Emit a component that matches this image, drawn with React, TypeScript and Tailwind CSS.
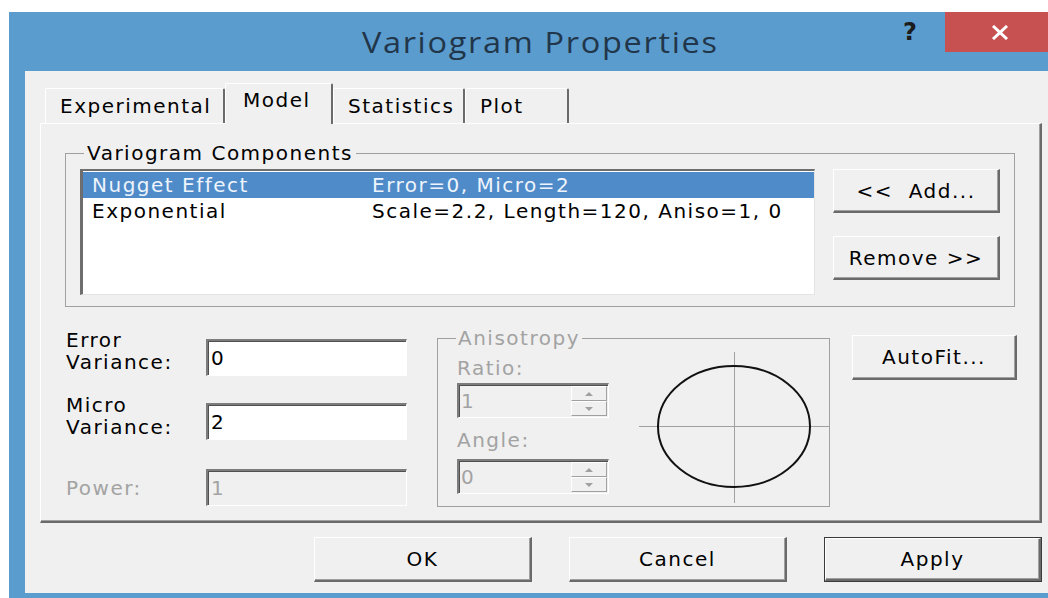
import clsx from "clsx";
import type { ReactNode } from "react";

// classic 3D edges
const raised =
  "bg-[#f0f0f0] border-t border-l border-t-white border-l-white border-r-2 border-b-2 border-r-[#6a6a6a] border-b-[#6a6a6a] shadow-[inset_-1px_-1px_0_#a0a0a0]";
const sunken =
  "border-t-2 border-l-2 border-t-[#7c7c7c] border-l-[#7c7c7c] border-b border-r border-b-white border-r-white shadow-[inset_1px_1px_0_#505050]";

function Button({
  children,
  className,
  primary = false,
}: {
  children: ReactNode;
  className?: string;
  primary?: boolean;
}) {
  if (primary) {
    return (
      <div className={clsx("border border-[#3a3a3a] flex", className)}>
        <div className={clsx(raised, "flex-1 flex items-center justify-center")}>{children}</div>
      </div>
    );
  }
  return (
    <div className={clsx(raised, "flex items-center justify-center whitespace-pre", className)}>
      {children}
    </div>
  );
}

function Tab({ label, width, active = false }: { label: string; width: number; active?: boolean }) {
  return (
    <div
      style={{ width }}
      className={clsx(
        "bg-[#f0f0f0] border-t border-l border-t-white border-l-white border-r-2 border-r-[#6a6a6a] rounded-t-[2px] leading-[24px]",
        active ? "h-[41px] pt-[4px] pl-[17px]" : "h-[35px] mb-px pt-[5px] pl-[14px]"
      )}
    >
      {label}
    </div>
  );
}

function Field({ value, disabled = false, className }: { value: string; disabled?: boolean; className?: string }) {
  return (
    <div
      className={clsx(
        sunken,
        "h-[37px] flex items-center pl-[3px]",
        disabled ? "bg-[#f0f0f0] text-[#a3a3a3]" : "bg-white",
        className
      )}
    >
      {value}
    </div>
  );
}

function Arrow({ up }: { up?: boolean }) {
  return (
    <div className="flex-1 flex items-center justify-center bg-[#f0f0f0] border-t border-l border-white border-r border-b border-r-[#a0a0a0] border-b-[#a0a0a0]">
      <svg width="8" height="4" viewBox="0 0 8 4">
        <path d={up ? "M0 4 L4 0 L8 4 Z" : "M0 0 L4 4 L8 0 Z"} fill="#a0a0a0" />
      </svg>
    </div>
  );
}

function Spinner({ value }: { value: string }) {
  return (
    <div className={clsx(sunken, "w-[152px] h-[35px] flex bg-[#f0f0f0]")}>
      <div className="flex-1 flex items-center pl-[2px] text-[#a3a3a3]">{value}</div>
      <div className="w-[37px] flex flex-col py-[1px] pr-[1px]">
        <Arrow up />
        <Arrow />
      </div>
    </div>
  );
}

function ListRow({ name, params, selected = false }: { name: string; params: string; selected?: boolean }) {
  return (
    <div className={clsx("h-[26px] flex items-center pl-[9px]", selected && "bg-[#4f8bc9] text-[#eef4fb]")}>
      <span className="w-[280px]">{name}</span>
      <span>{params}</span>
    </div>
  );
}

export default function App() {
  return (
    <div className="w-[1048px] h-[598px] overflow-hidden bg-white pt-[12px] pl-[9px] font-['DejaVu_Sans',sans-serif] text-[20px] tracking-[1.5px] text-black">
      <div className="w-[1062px] h-[600px] bg-[#5b9ccf] flex flex-col">
        {/* caption */}
        <div className="h-[59px] shrink-0 flex">
          <div className="w-[176px]" />
          <div className="flex-1 flex items-center justify-center">
            <span className="scale-x-[1.12] font-['Open_Sans',sans-serif] text-[29px] tracking-[1.5px] text-[#22364a]">
              Variogram Properties
            </span>
          </div>
          <div className="w-[176px] flex items-start">
            <div className="w-[30px] h-[40px] flex items-center justify-center font-bold text-[24px] tracking-normal text-[#1c1c1c]">
              ?
            </div>
            <div className="ml-[20px] w-[110px] h-[40px] bg-[#c75050] flex items-center justify-center">
              <svg width="20" height="15" viewBox="0 0 20 15">
                <path d="M3 1 L17 14 M17 1 L3 14" stroke="#fff" strokeWidth="3" />
              </svg>
            </div>
          </div>
        </div>

        {/* client area */}
        <div className="mx-[16px] h-[522px] bg-[#f0f0f0] pl-[15px] pt-[12px]">
          <div className="h-[41px] -mb-px flex items-end pl-[5px] relative z-10">
            <Tab label="Experimental" width={180} />
            <Tab label="Model" width={108} active />
            <Tab label="Statistics" width={132} />
            <Tab label="Plot" width={104} />
          </div>

          <div className="w-[1002px] h-[400px] border-t border-l border-white border-r-2 border-b-2 border-r-[#6a6a6a] border-b-[#6a6a6a] shadow-[inset_-1px_-1px_0_#a0a0a0] pl-[24px] pt-[18px]">
            <fieldset className="w-[945px] h-[165px] border border-[#a0a0a0] px-[14px]">
              <legend className="ml-[4px] px-[3px] leading-[22px]">Variogram Components</legend>
              <div className="flex items-start mt-[5px]">
                <div className="w-[735px] h-[126px] bg-white border-t-2 border-l-[3px] border-t-[#6e6e6e] border-l-[#6e6e6e] border-r border-b border-r-[#e4e4e4] border-b-[#e4e4e4] pt-px">
                  <ListRow name="Nugget Effect" params="Error=0, Micro=2" selected />
                  <ListRow name="Exponential" params="Scale=2.2, Length=120, Aniso=1, 0" />
                </div>
                <div className="ml-[18px] flex flex-col gap-[23px]">
                  <Button className="w-[167px] h-[44px]">{"<<  Add..."}</Button>
                  <Button className="w-[167px] h-[44px]">{"Remove >>"}</Button>
                </div>
              </div>
            </fieldset>

            <div className="flex items-start mt-[21px]">
              <div className="ml-[1px] w-[341px] pt-px flex flex-col">
                <div className="flex items-start">
                  <div className="w-[140px] leading-[22px]">
                    Error
                    <br />
                    Variance:
                  </div>
                  <Field value="0" className="w-[201px] mt-[10px]" />
                </div>
                <div className="flex items-start mt-[18px]">
                  <div className="w-[140px] leading-[22px]">
                    Micro
                    <br />
                    Variance:
                  </div>
                  <Field value="2" className="w-[201px] mt-[9px]" />
                </div>
                <div className="flex items-center mt-[29px]">
                  <div className="w-[140px] text-[#a3a3a3]">Power:</div>
                  <Field value="1" disabled className="w-[201px]" />
                </div>
              </div>

              <fieldset className="ml-[30px] -mt-px w-[393px] h-[180px] border border-[#a0a0a0] text-[#a3a3a3]">
                <legend className="ml-[18px] px-[2px] leading-[22px]">Anisotropy</legend>
                <div className="flex items-start">
                  <div className="pl-[19px] w-[171px] flex flex-col">
                    <div className="mt-[8px] leading-[22px]">Ratio:</div>
                    <div className="mt-[4px]">
                      <Spinner value="1" />
                    </div>
                    <div className="mt-[11px] leading-[22px]">Angle:</div>
                    <div className="mt-[8px]">
                      <Spinner value="0" />
                    </div>
                  </div>
                  <svg className="ml-[30px] mt-[3px]" width="190" height="151" viewBox="0 0 190 151">
                    <path d="M0 74.5 H190 M95.5 0 V151" stroke="#a0a0a0" strokeWidth="1" />
                    <ellipse cx="95" cy="74.5" rx="76" ry="60.5" fill="none" stroke="#111" strokeWidth="2" />
                  </svg>
                </div>
              </fieldset>

              <Button className="ml-[22px] mt-[7px] w-[165px] h-[45px]">AutoFit...</Button>
            </div>
          </div>

          <div className="w-[1002px] mt-[14px] flex justify-end gap-[37px]">
            <Button className="w-[218px] h-[45px]">OK</Button>
            <Button className="w-[218px] h-[45px]">Cancel</Button>
            <Button primary className="w-[218px] h-[45px]">
              Apply
            </Button>
          </div>
        </div>
      </div>
    </div>
  );
}
